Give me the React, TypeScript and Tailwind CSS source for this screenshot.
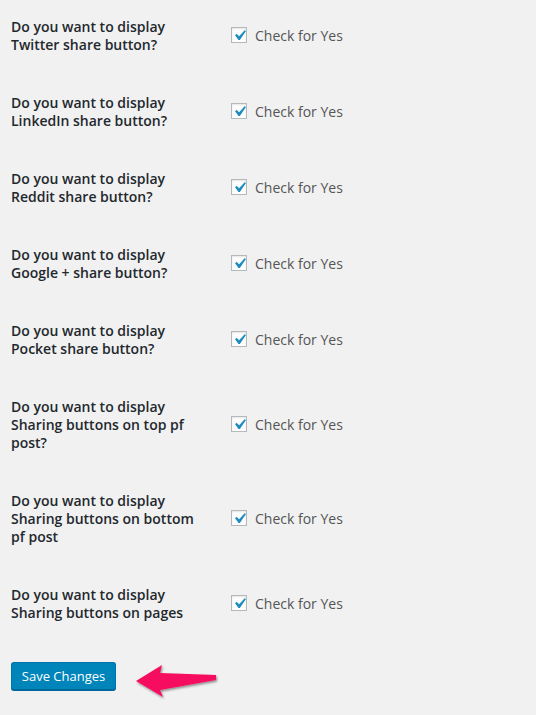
const rows: string[][] = [
  ["Do you want to display", "Twitter share button?"],
  ["Do you want to display", "LinkedIn share button?"],
  ["Do you want to display", "Reddit share button?"],
  ["Do you want to display", "Google + share button?"],
  ["Do you want to display", "Pocket share button?"],
  ["Do you want to display", "Sharing buttons on top pf", "post?"],
  ["Do you want to display", "Sharing buttons on bottom", "pf post"],
  ["Do you want to display", "Sharing buttons on pages"],
];

function CheckBox() {
  return (
    <span className="flex h-4 w-4 items-center justify-center overflow-visible border border-[#b4b9be] bg-[#fefefe] shadow-[inset_0_1px_2px_rgba(0,0,0,0.1)]">
      <svg width="21" height="21" viewBox="0 0 20 20" className="-m-[3px] shrink-0">
        <path d="M14.83 4.89l1.34.94-5.81 8.38H9.02L5.78 9.67l1.34-1.25 2.57 2.4z" fill="#1e8cbe" />
      </svg>
    </span>
  );
}

export default function App() {
  return (
    <div className="min-h-[715px] w-[536px] bg-[#f1f1f1] pl-[11px] pt-[18px] font-['Open_Sans',sans-serif] text-[14px]">
      <div className="flex flex-col gap-10">
        {rows.map((lines, i) => (
          <div key={i} className="flex items-center">
            <div className="w-[220px] font-semibold leading-[18px] text-[#23282d]">
              {lines.map((l, j) => (
                <div key={j}>{l}</div>
              ))}
            </div>
            <label className="mb-[2px] flex items-center gap-2 text-[#555]">
              <CheckBox />
              <span>Check for Yes</span>
            </label>
          </div>
        ))}
      </div>
      <div className="mt-[40px] flex items-start">
        <button className="h-[28px] w-[105px] rounded-[3px] border border-[#0073aa] border-b-[#006799] bg-[#0085ba] pb-px text-[13px] leading-[26px] text-white shadow-[0_1px_0_#006799]">
          Save Changes
        </button>
        <svg width="100" height="40" viewBox="0 0 100 40" className="ml-[4px] mt-[2px]">
          <defs>
            <filter id="sh" x="-20%" y="-20%" width="140%" height="150%">
              <feDropShadow dx="1" dy="1.5" stdDeviation="1" floodColor="#000" floodOpacity="0.45" />
            </filter>
          </defs>
          <polygon
            points="16,17 42,1 40,9 96,11 96,16 40,26 43,33"
            fill="#f7105f"
            filter="url(#sh)"
          />
        </svg>
      </div>
    </div>
  );
}
